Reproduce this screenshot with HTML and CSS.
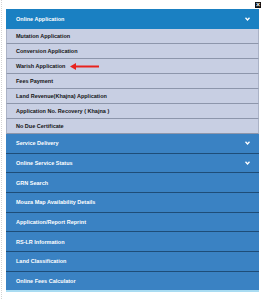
FILE: index.html
```html
<!DOCTYPE html>
<html lang="en">
    <head>
        <meta charset="UTF-8">
        <title>Online Services</title>
        <link rel="stylesheet" href="styles.css">
    </head>
    <body>
    <div class="page">
        <span class="close">&times;</span>
        <ul class="menu">
            <li class="head open">Online Application
                <svg class="chev" width="5" height="4" viewBox="0 0 5 4"><path d="M0.5 0.8 L2.5 3 L4.5 0.8" fill="none" stroke="#fff" stroke-width="1.3"/></svg>
            </li>
            <li class="sub">Mutation Application</li>
            <li class="sub">Conversion Application</li>
            <li class="sub">Warish Application
                <svg class="arrow" width="30" height="7" viewBox="0 0 30 7"><path d="M29 3.5 H5" stroke="#e8231e" stroke-width="2"/><path d="M0 3.5 L6 0 L6 7 Z" fill="#e8231e"/></svg>
            </li>
            <li class="sub">Fees Payment</li>
            <li class="sub">Land Revenue(Khajna) Application</li>
            <li class="sub">Application No. Recovery ( Khajna )</li>
            <li class="sub">No Due Certificate</li>
            <li class="item">Service Delivery
                <svg class="chev" width="5" height="4" viewBox="0 0 5 4"><path d="M0.5 0.8 L2.5 3 L4.5 0.8" fill="none" stroke="#fff" stroke-width="1.3"/></svg>
            </li>
            <li class="item">Online Service Status
                <svg class="chev" width="5" height="4" viewBox="0 0 5 4"><path d="M0.5 0.8 L2.5 3 L4.5 0.8" fill="none" stroke="#fff" stroke-width="1.3"/></svg>
            </li>
            <li class="item">GRN Search</li>
            <li class="item">Mouza Map Availability Details</li>
            <li class="item">Application/Report Reprint</li>
            <li class="item">RS-LR Information</li>
            <li class="item">Land Classification</li>
            <li class="item last">Online Fees Calculator</li>
        </ul>
    </div>
    </body>
</html>
```

FILE: styles.css
```css
*{
    margin:0;
    padding:0;
}
body{
    background:#ffffff;
    font-family:"Liberation Sans", Arial, sans-serif;
}
li{
    list-style:none;
}
.page{
    position:relative;
    height:300px;
    margin-left:1px;
    border-left:1px dotted #d4d4d4;
    padding:9px 0 0 4px;
}
.close{
    position:absolute;
    top:2px;
    left:253px;
    width:6px;
    height:6px;
    background:#111111;
    color:#ffffff;
    font-size:7px;
    line-height:6px;
    text-align:center;
    font-weight:bold;
}
.menu{
    width:253px;
    font-size:5.5px;
    font-weight:bold;
}
.menu li{
    display:flex;
    align-items:center;
    justify-content:space-between;
    padding:0 9px 0 10px;
    box-sizing:border-box;
}
.menu .head{
    height:20px;
    background:#1a80c2;
    color:#ffffff;
}
.menu .sub{
    height:15px;
    background:#c8cfe3;
    color:#141414;
    border-left:1px solid #aab2c6;
    border-right:1px solid #aab2c6;
    border-bottom:1px solid #8d96ab;
    padding-left:9px;
    justify-content:flex-start;
}
.menu .item{
    height:19.7px;
    background:#3a82c3;
    color:#ffffff;
    border-bottom:1px solid #1e4d78;
}
.menu .last{
    border-bottom:2px solid #a9dcf2;
}
.chev{
    display:block;
}
.arrow{
    display:block;
    margin-left:5px;
}
```
